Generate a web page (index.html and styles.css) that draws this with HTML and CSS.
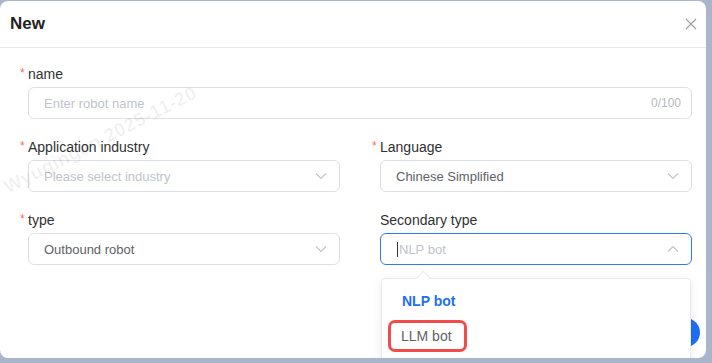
FILE: index.html
```html
<!DOCTYPE html>
<html lang="en">
<head>
    <meta charset="UTF-8">
    <meta name="viewport" content="width=device-width, initial-scale=1.0">
    <title>New robot</title>
    <link rel="stylesheet" href="styles.css">
</head>
<body>

    <div class="dialog">
        <div class="dialog-header">
            <h2>New</h2>
            <button class="close-btn" aria-label="Close">
                <svg width="12" height="12" viewBox="0 0 12 12">
                    <path d="M1 1 L11 11 M11 1 L1 11" stroke="#9a9ea6" stroke-width="1.1" fill="none" />
                </svg>
            </button>
        </div>

        <form class="dialog-body">
            <div class="field full">
                <label><span class="req">*</span>name</label>
                <div class="input">
                    <span class="placeholder">Enter robot name</span>
                    <span class="count">0/100</span>
                </div>
            </div>

            <div class="row">
                <div class="field">
                    <label><span class="req">*</span>Application industry</label>
                    <div class="input">
                        <span class="placeholder">Please select industry</span>
                        <svg class="chevron" width="12" height="8" viewBox="0 0 12 8"><path d="M1 1.5 L6 6.5 L11 1.5" stroke="#c0c4cc" stroke-width="1.1" fill="none" /></svg>
                    </div>
                </div>
                <div class="field">
                    <label><span class="req">*</span>Language</label>
                    <div class="input">
                        <span class="value">Chinese Simplified</span>
                        <svg class="chevron" width="12" height="8" viewBox="0 0 12 8"><path d="M1 1.5 L6 6.5 L11 1.5" stroke="#c0c4cc" stroke-width="1.1" fill="none" /></svg>
                    </div>
                </div>
            </div>

            <div class="row">
                <div class="field">
                    <label><span class="req">*</span>type</label>
                    <div class="input">
                        <span class="value">Outbound robot</span>
                        <svg class="chevron" width="12" height="8" viewBox="0 0 12 8"><path d="M1 1.5 L6 6.5 L11 1.5" stroke="#c0c4cc" stroke-width="1.1" fill="none" /></svg>
                    </div>
                </div>
                <div class="field select-open">
                    <label class="plain">Secondary type</label>
                    <div class="input focused">
                        <span class="placeholder"><span class="caret"></span>NLP bot</span>
                        <svg class="chevron" width="12" height="8" viewBox="0 0 12 8"><path d="M1 6.5 L6 1.5 L11 6.5" stroke="#c0c4cc" stroke-width="1.1" fill="none" /></svg>
                    </div>

                    <!-- dropdown list -->
                    <div class="dropdown">
                        <div class="option selected">NLP bot</div>
                        <div class="option"><span class="marked">LLM bot</span></div>
                    </div>
                </div>
            </div>
        </form>

        <div class="confirm-btn"></div>
        <div class="watermark">Wyuqingan 2025-11-20</div>
    </div>

</body>
</html>
```

FILE: styles.css
```css
/* Global reset */
* {
    margin: 0;
    padding: 0;
    box-sizing: border-box;
}

body {
    font-family: "Liberation Sans", Arial, sans-serif;
    background-color: #a9b5ca;
    width: 712px;
    height: 363px;
    overflow: hidden;
    padding: 1px 6px 5px 0;
}

.dialog {
    position: relative;
    background-color: #ffffff;
    height: 357px;
    border-radius: 8px;
    overflow: hidden;
}

.dialog-header {
    display: flex;
    justify-content: space-between;
    align-items: center;
    height: 47px;
    padding: 0 8px 0 10px;
    border-bottom: 1px solid #e8e9ec;
}

    .dialog-header h2 {
        font-size: 17px;
        font-weight: bold;
        color: #222;
    }

.close-btn {
    background: none;
    border: none;
    width: 14px;
    height: 14px;
    display: flex;
    align-items: center;
    justify-content: center;
    cursor: pointer;
}

.dialog-body {
    padding: 18px 14px 0 20px;
}

.row {
    display: flex;
    gap: 32px;
}

    .row .field {
        width: 320px;
    }

.field {
    margin-bottom: 20px;
}

label {
    display: block;
    font-size: 14px;
    color: #303133;
    line-height: 17px;
    margin-bottom: 4px;
}

    label .req {
        color: #f56c6c;
        display: inline-block;
        width: 8px;
        font-size: 12px;
        vertical-align: top;
        line-height: 14px;
    }

    label.plain {
        padding-left: 8px;
    }

.input {
    margin-left: 8px;
    height: 32px;
    border: 1px solid #dcdfe6;
    border-radius: 6px;
    display: flex;
    align-items: center;
    justify-content: space-between;
    padding: 0 10px 0 15px;
    font-size: 13px;
}

    .input.focused {
        border-color: #2c7cf6;
    }

.placeholder {
    color: #c0c4cc;
    display: flex;
    align-items: center;
}

.value {
    color: #606266;
}

.count {
    color: #b7bac1;
    font-size: 12px;
}

.caret {
    display: inline-block;
    width: 1px;
    height: 15px;
    background-color: #333;
    margin-right: 1px;
    margin-left: 1px;
}

.chevron {
    margin-right: 2px;
}

.select-open {
    position: relative;
}

.dropdown {
    position: absolute;
    left: 9px;
    top: 66px;
    width: 310px;
    height: 90px;
    background-color: #fff;
    border: 1px solid #e8eaee;
    border-radius: 4px;
    box-shadow: 0 2px 10px rgba(0, 0, 0, 0.08);
    padding-top: 5px;
    z-index: 2;
}

    .dropdown::before {
        content: "";
        position: absolute;
        top: -6px;
        left: 36px;
        width: 10px;
        height: 10px;
        background: #fff;
        border-left: 1px solid #e8eaee;
        border-top: 1px solid #e8eaee;
        transform: rotate(45deg);
    }

.option {
    font-size: 14px;
    color: #606266;
    padding: 0 20px;
    height: 35px;
    line-height: 35px;
}

    .option.selected {
        color: #1f6ff5;
        font-weight: bold;
    }

.marked {
    display: inline-block;
    line-height: 26px;
    margin-left: -14px;
    padding: 0 12px 0 10px;
    border: 3px solid #f24b4b;
    border-radius: 7px;
}

.confirm-btn {
    position: absolute;
    right: 6px;
    top: 317px;
    width: 40px;
    height: 29px;
    border-radius: 15px;
    background-color: #1f6ff5;
}

.watermark {
    position: absolute;
    left: -22px;
    top: 128px;
    width: 245px;
    text-align: center;
    font-size: 19px;
    font-weight: bold;
    color: rgba(0, 0, 0, 0.06);
    transform: rotate(-27deg);
    white-space: nowrap;
    pointer-events: none;
    letter-spacing: 0.5px;
}
```
